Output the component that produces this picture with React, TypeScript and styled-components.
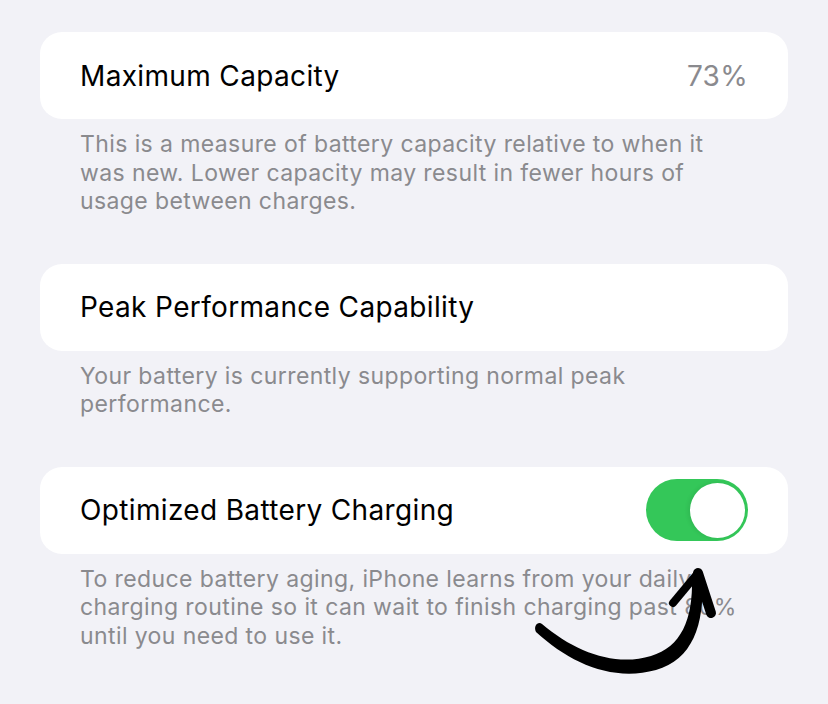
import React from "react";
import styled, { createGlobalStyle } from "styled-components";

const GlobalStyle = createGlobalStyle`
  html, body {
    margin: 0;
    padding: 0;
    background: #f2f2f7;
  }
  body {
    font-family: Inter, "Noto Sans", "Liberation Sans", sans-serif;
    -webkit-font-smoothing: antialiased;
  }
`;

const Page = styled.div`
  position: relative;
  width: 828px;
  height: 704px;
  box-sizing: border-box;
  padding: 32px 40px 0;
  display: flex;
  flex-direction: column;
  gap: 48px;
  overflow: hidden;
`;

const Section = styled.section`
  display: flex;
  flex-direction: column;
`;

const Card = styled.div`
  height: 87px;
  background: #ffffff;
  border-radius: 22px;
  padding: 0 40px;
  display: flex;
  align-items: center;
  justify-content: space-between;
  box-sizing: border-box;
`;

const Title = styled.span`
  font-size: 28px;
  color: #000000;
  letter-spacing: 0.35px;
`;

const Value = styled.span`
  font-size: 28px;
  color: #8a8a8e;
  letter-spacing: 0.3px;
`;

const Footer = styled.p`
  margin: 11px 0 0;
  padding: 0 40px;
  font-size: 23px;
  line-height: 28.5px;
  color: #8a8a8e;
  letter-spacing: 0.4px;
`;

const Switch = styled.div<{ $on: boolean }>`
  width: 102px;
  height: 62px;
  border-radius: 31px;
  background: ${(p) => (p.$on ? "#34c759" : "#e9e9ea")};
  display: flex;
  align-items: center;
  justify-content: ${(p) => (p.$on ? "flex-end" : "flex-start")};
  padding: 0 3px;
  box-sizing: border-box;
`;

const Knob = styled.div`
  width: 55px;
  height: 55px;
  border-radius: 50%;
  background: #ffffff;
  box-shadow: -2px 0 4px rgba(0, 0, 0, 0.08);
`;

const Scribble = styled.svg`
  position: absolute;
  left: 0;
  top: 0;
  pointer-events: none;
`;

export default function App() {
  return (
    <>
      <GlobalStyle />
      <Page>
        <Section>
          <Card>
            <Title>Maximum Capacity</Title>
            <Value>73%</Value>
          </Card>
          <Footer>
            This is a measure of battery capacity relative to when it was new.
            Lower capacity may result in fewer hours of usage between charges.
          </Footer>
        </Section>
        <Section>
          <Card>
            <Title>Peak Performance Capability</Title>
          </Card>
          <Footer>
            Your battery is currently supporting normal peak performance.
          </Footer>
        </Section>
        <Section>
          <Card>
            <Title>Optimized Battery Charging</Title>
            <Switch $on>
              <Knob />
            </Switch>
          </Card>
          <Footer>
            To reduce battery aging, iPhone learns from your daily charging
            routine so it can wait to finish charging past 80% until you need
            to use it.
          </Footer>
        </Section>
        {/* hand-drawn arrow pointing at the switch */}
        <Scribble width="828" height="704" viewBox="0 0 828 704">
          <path
            d="M536 632 C 570 663 612 682 656 670 C 692 660 705 625 702 578
               L 697 572
               L 692 578 C 693 620 681 647 651 656 C 615 667 575 652 542 624
               C 538 621 533 626 536 632 Z"
            fill="#000"
          />
          <path
            d="M673 603 L 698 573"
            fill="none"
            stroke="#000"
            strokeWidth="8"
            strokeLinecap="round"
          />
          <path
            d="M698 573 L 711 613"
            fill="none"
            stroke="#000"
            strokeWidth="10"
            strokeLinecap="round"
          />
        </Scribble>
      </Page>
    </>
  );
}
